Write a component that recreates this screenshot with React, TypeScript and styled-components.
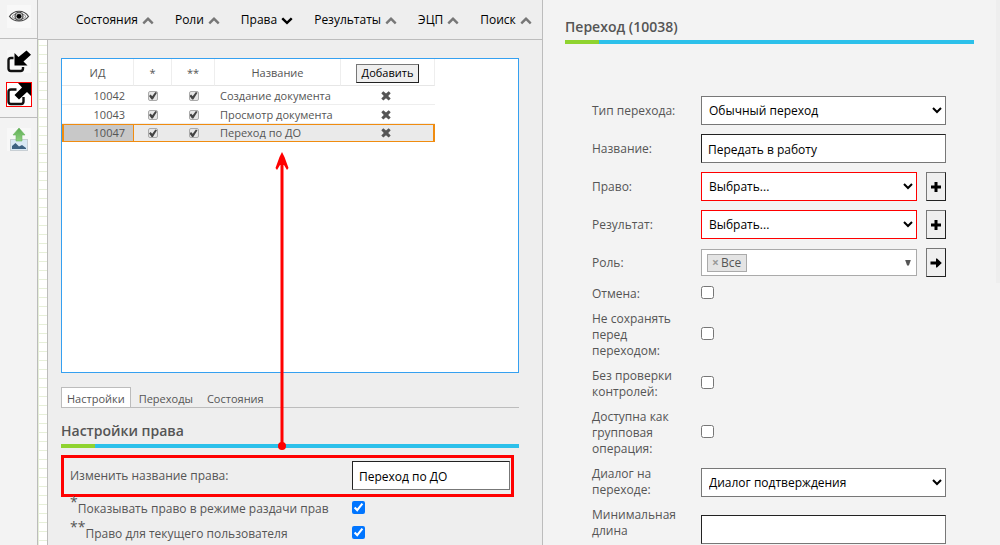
import React from "react";
import styled, { createGlobalStyle, css } from "styled-components";

const GlobalStyle = createGlobalStyle`
  *, *::before, *::after { box-sizing: border-box; }
  body {
    margin: 0;
    font-family: "Open Sans", "Noto Sans", sans-serif;
    font-size: 12px;
    line-height: 16px;
    color: #555;
    background: #eee;
  }
  button, input, select { font-family: inherit; font-size: inherit; color: #000; margin: 0; }
`;

const line = "#bcbcbc";

const Page = styled.div`
  display: grid;
  grid-template-columns: 38px minmax(0, 505fr) minmax(0, 453fr) 4px;
  height: 100vh;
  overflow: hidden;
`;

const Sidebar = styled.nav`
  display: flex;
  flex-direction: column;
  background: #f3f3f3;
  border-right: 1px solid ${line};
`;

const ToolGroup = styled.div`
  display: flex;
  flex-direction: column;
  align-items: center;
  gap: 9px;
  padding: 11px 0 10px;
  border-bottom: 1px solid ${line};
  &:first-child { padding-top: 5px; }
  &:last-child { border-bottom: 0; padding-top: 10px; }
`;

const ToolButton = styled.button<{ $active?: boolean }>`
  box-sizing: content-box;
  width: 24px;
  height: 23px;
  padding: 0;
  border: ${(p) => (p.$active ? "1px solid #f00" : "0")};
  background: ${(p) => (p.$active ? "#fff" : "#f8f8f8")};
  svg { display: block; width: 24px; height: 23px; }
`;

const Middle = styled.div`
  display: flex;
  flex-direction: column;
  min-height: 0;
  background: #eee;
  border-right: 1px solid ${line};
`;

const MenuBar = styled.nav`
  display: flex;
  flex: none;
  align-items: center;
  gap: 21px;
  height: 40px;
  padding-left: 38px;
  border-bottom: 1px solid ${line};
`;

const MenuButton = styled.button`
  display: flex;
  align-items: center;
  gap: 4px;
  padding: 0;
  border: 0;
  background: none;
  font-size: 12px;
  font-weight: 500;
  line-height: 16px;
`;

const Workspace = styled.div`
  display: flex;
  flex: 1;
  min-height: 0;
`;

const GridStrip = styled.div`
  flex: none;
  width: 10px;
  border-left: 1px solid #e6efd9;
  border-right: 1px solid ${line};
  background: repeating-linear-gradient(#fff 0 5px, #e6efd9 5px 6px, #fff 6px 9px);
`;

const Rights = styled.main`
  position: relative;
  flex: 1;
  min-width: 0;
  padding: 18px 23px 0 13px;
  overflow: hidden;
`;

const TableBox = styled.div`
  height: 315px;
  border: 1px solid #35a0f0;
  background: #fff;
`;

const RightsTable = styled.table`
  width: 373px;
  table-layout: fixed;
  border-collapse: separate;
  border-spacing: 0;
  font-size: 11px;
  th {
    height: 27px;
    padding: 2px 0 0;
    font-weight: 400;
    border-right: 1px solid #eee;
    border-bottom: 1px solid #e6e6e6;
  }
  td {
    height: 19px;
    padding: 1px 0 0;
    text-align: center;
    white-space: nowrap;
    border-bottom: 1px solid #eee;
  }
  td:first-child { text-align: right; padding-right: 9px; }
  td:nth-child(4) { text-align: left; padding-left: 5px; }
  td:last-child { padding-right: 5px; }
`;

const RightRow = styled.tr<{ $selected?: boolean }>`
  ${(p) =>
    p.$selected &&
    css`
      background: #eaeaea;
      td { height: 18px; padding-top: 0; border-top: 1px solid #f08c10; border-bottom-color: #f08c10; }
      td:first-child {
        background: #c8c8c8;
        border-left: 2px solid #f08c10;
        border-right: 1px solid #f08c10;
        padding-right: 8px;
      }
      td:last-child { border-right: 2px solid #f08c10; padding-right: 3px; }
    `}
`;

const FlagBox = styled.input`
  appearance: none;
  position: relative;
  display: block;
  width: 10px;
  height: 10px;
  margin: 0 auto;
  border: 1px solid #aaa;
  border-radius: 2px;
  background: #e6e6e6;
  &:checked::before {
    content: "";
    position: absolute;
    inset: 0;
    background: #444;
    clip-path: polygon(0 55%, 20% 38%, 40% 60%, 80% 5%, 100% 15%, 48% 100%, 32% 100%);
  }
`;

const AddButton = styled.button`
  display: block;
  width: 63px;
  height: 19px;
  margin: 0 auto;
  padding: 0;
  line-height: 16px;
  border: 1px solid #777;
  border-right-color: #222;
  border-bottom-color: #222;
  background: #efefef;
`;

const IconButton = styled.button`
  display: block;
  margin: 0 auto;
  padding: 0;
  border: 0;
  background: none;
  svg { display: block; }
`;

const Tabs = styled.div`
  display: flex;
  gap: 2px;
  margin-top: 14px;
  border-bottom: 1px solid ${line};
`;

const Tab = styled.button<{ $active?: boolean }>`
  height: 20px;
  padding: 3px 5px 0;
  border: 1px solid ${(p) => (p.$active ? line : "transparent")};
  border-bottom: 0;
  background: ${(p) => (p.$active ? "#fff" : "none")};
  color: #555;
  font-size: 11px;
  line-height: 16px;
`;

const Heading = styled.h2`
  margin: 0;
  font-size: 14px;
  font-weight: 600;
  line-height: 20px;
  &::after {
    content: "";
    display: block;
    height: 4px;
    margin-top: 3px;
    background: linear-gradient(90deg, #8fd32f 34px, #2cc0ea 34px);
  }
`;

const SettingsHead = styled.div`
  padding: 13px 0 3px;
`;

const SettingRow = styled.div<{ $marked?: boolean }>`
  display: flex;
  align-items: center;
  margin-right: 5px;
  padding: 4px 4px 5px 9px;
  ${(p) =>
    p.$marked &&
    css`
      margin-top: 4px;
      padding: 3px 1px 4px 6px;
      border: 3px solid #f00;
    `}
`;

const SettingLabel = styled.label`
  flex: 1;
  white-space: nowrap;
  sup {
    font-size: 14px;
    line-height: 0;
    vertical-align: 6px;
  }
`;

const SettingField = styled.div`
  flex: none;
  width: 158px;
  display: flex;
`;

const TextInput = styled.input`
  width: 100%;
  height: 29px;
  padding: 2px 6px 0;
  border: 1px solid #777;
  border-top-color: #222;
  border-left-color: #222;
  border-radius: 0;
  background: #fff;
`;

const CheckInput = styled.input`
  && {
    width: 13px;
    height: 13px;
    margin-bottom: 3px;
  }
`;

const Pointer = styled.svg`
  position: absolute;
  left: 226px;
  top: 111px;
  width: 16px;
  height: 300px;
  pointer-events: none;
`;

const Details = styled.aside`
  min-height: 0;
  overflow: hidden;
  padding: 17px 22px 0;
  background: #f3f3f3;
`;

const Form = styled.form`
  padding: 48px 28px 0 27px;
`;

const FormRow = styled.div`
  display: flex;
  align-items: center;
  padding: 4px 0 5px;
`;

const FormLabel = styled.label<{ $tall?: boolean }>`
  flex: none;
  width: 109px;
  min-height: ${(p) => (p.$tall ? 44 : 16)}px;
  padding-right: 20px;
`;

const FormField = styled.div`
  display: flex;
  align-items: center;
  flex: 1;
  min-width: 0;
  gap: 9px;
`;

const Select = styled.select<{ $required?: boolean }>`
  flex: 1;
  min-width: 0;
  height: 29px;
  padding: 0 3px;
  border: 1px solid ${(p) => (p.$required ? "#f00" : "#777")};
  border-radius: 0;
  background-color: #fff;
`;

const SquareButton = styled.button`
  flex: none;
  display: grid;
  place-items: center;
  width: 20px;
  height: 29px;
  padding: 0;
  border: 1px solid #777;
  border-right-color: #222;
  border-bottom-color: #222;
  background: #efefef;
`;

const TagBox = styled.div`
  display: flex;
  align-items: center;
  flex: 1;
  height: 27px;
  padding: 0 5px;
  border: 1px solid #aaa;
  background: #fff;
`;

const Tag = styled.span`
  display: flex;
  align-items: center;
  gap: 2px;
  height: 18px;
  padding: 0 5px 0 4px;
  border: 1px solid #aaa;
  background: #e4e4e4;
`;

const TagRemove = styled.button`
  padding: 0;
  border: 0;
  background: none;
  color: #999;
  font-weight: 700;
  line-height: 16px;
`;

const Caret = styled.span`
  margin-left: auto;
  width: 6px;
  height: 6px;
  background: #555;
  clip-path: polygon(0 0, 100% 0, 65% 100%, 35% 100%);
`;

const ScrollTrack = styled.div`
  background: #f3f3f3;
  &::before {
    content: "";
    display: block;
    height: 52vh;
    background: #eee;
  }
`;

const Chevron = ({ down }: { down?: boolean }) => (
  <svg width="12" height="12" viewBox="0 0 1792 1792" fill={down ? "#000" : "#777"} aria-hidden="true">
    {down ? (
      <path d="M1683 808l-742 741q-19 19-45 19t-45-19l-742-741q-19-19-19-45.5t19-45.5l166-165q19-19 45-19t45 19l531 531 531-531q19-19 45-19t45 19l166 165q19 19 19 45.5t-19 45.5z" />
    ) : (
      <path d="M1683 1331l-166 165q-19 19-45 19t-45-19l-531-531-531 531q-19 19-45 19t-45-19l-166-165q-19-19-19-45.5t19-45.5l742-741q19-19 45-19t45 19l742 741q19 19 19 45.5t-19 45.5z" />
    )}
  </svg>
);

const Cross = () => (
  <svg width="10" height="10" viewBox="0 0 10 10" fill="#555" aria-hidden="true">
    <path d="M0.3 2.3 2.3 0.3 5 2.5 7.7 0.3 9.7 2.3 7.2 4.9 9.7 7.5 7.7 9.6 5 7.3 2.3 9.6 0.3 7.5 2.8 4.9z" />
  </svg>
);

const Plus = () => (
  <svg width="12" height="12" viewBox="0 0 12 12" aria-hidden="true">
    <path d="M4.5 1h3v3.5H11v3H7.5V11h-3V7.5H1v-3h3.5z" />
  </svg>
);

const ArrowRight = () => (
  <svg width="12" height="12" viewBox="0 0 12 12" aria-hidden="true">
    <path d="M0.5 4.5H6V1.5H7L11.8 6 7 10.5H6V7.5H0.5z" />
  </svg>
);

const EyeIcon = () => (
  <svg viewBox="0 0 24 23" fill="none" stroke="#444" aria-hidden="true">
    <path d="M2.5 11.5C7 4.5 17 4.5 21.5 11.5C17 17.5 7 17.5 2.5 11.5z" strokeWidth="1.2" />
    <path d="M5 11.5C8 7.5 16 7.5 19 11.5C16 15.5 8 15.5 5 11.5z" strokeWidth="0.6" />
    <circle cx="12" cy="11.3" r="4" strokeWidth="1.1" fill="#bbb" />
    <circle cx="12" cy="11.3" r="2.4" fill="#000" stroke="none" />
  </svg>
);

const ImportIcon = () => (
  <svg viewBox="0 0 24 23" aria-hidden="true">
    <path d="M6.5 8H4Q1.500 8 1.500 10.500V18.500Q1.500 21 4 21H13.500Q16 21 16 18.500V17" fill="none" stroke="#111" strokeWidth="2.400" />
    <path d="M19.500 0.500 24 4.800 16.500 11.500 20.500 15.500H7.500V3L11.500 7z" fill="#000" />
  </svg>
);

const ExportIcon = () => (
  <svg viewBox="0 0 24 23" aria-hidden="true">
    <path d="M9.500 6.500H4Q1.500 6.500 1.500 9V18.500Q1.500 21 4 21H14Q16.500 21 16.500 18.500V14" fill="none" stroke="#111" strokeWidth="2.400" />
    <path d="M11 0H24V13L20 9 12 16.500 7.500 12 15 4.500z" fill="#000" />
  </svg>
);

const UploadImageIcon = () => (
  <svg viewBox="0 0 24 23" aria-hidden="true">
    <defs>
      <linearGradient id="leaf" x1="0" y1="0" x2="0" y2="1">
        <stop offset="0" stopColor="#5fae55" />
        <stop offset="1" stopColor="#8fd080" />
      </linearGradient>
    </defs>
    <rect x="3.5" y="11.5" width="17" height="11" fill="#d9e9f5" stroke="#c8cfd4" />
    <path d="M5 21V18L8.500 15 12 18.500 15 17 19 20V21z" fill="#3d6282" />
    <path d="M12 0 18 7H15V13H9V7H6z" fill="url(#leaf)" stroke="#6cb562" strokeWidth="0.600" />
  </svg>
);

const menu = [
  { title: "Состояния" },
  { title: "Роли" },
  { title: "Права", open: true },
  { title: "Результаты" },
  { title: "ЭЦП" },
  { title: "Поиск" },
];

const rights = [
  { id: 10042, name: "Создание документа" },
  { id: 10043, name: "Просмотр документа" },
  { id: 10047, name: "Переход по ДО", selected: true },
];

const CheckRow = ({ id, label }: { id: string; label: string }) => (
  <FormRow>
    <FormLabel htmlFor={id}>{label}</FormLabel>
    <FormField>
      <CheckInput type="checkbox" id={id} />
    </FormField>
  </FormRow>
);

export default function App() {
  return (
    <>
      <GlobalStyle />
      <Page>
        <Sidebar>
          <ToolGroup>
            <ToolButton aria-label="Просмотр"><EyeIcon /></ToolButton>
          </ToolGroup>
          <ToolGroup>
            <ToolButton aria-label="Импорт"><ImportIcon /></ToolButton>
            <ToolButton $active aria-label="Экспорт"><ExportIcon /></ToolButton>
          </ToolGroup>
          <ToolGroup>
            <ToolButton aria-label="Загрузить изображение"><UploadImageIcon /></ToolButton>
          </ToolGroup>
        </Sidebar>

        <Middle>
          <MenuBar>
            {menu.map((m) => (
              <MenuButton key={m.title}>
                {m.title}
                <Chevron down={m.open} />
              </MenuButton>
            ))}
          </MenuBar>
          <Workspace>
            <GridStrip />
            <Rights>
              <TableBox>
                <RightsTable>
                  <colgroup>
                    <col style={{ width: 72 }} />
                    <col style={{ width: 38 }} />
                    <col style={{ width: 43 }} />
                    <col style={{ width: 126 }} />
                    <col />
                  </colgroup>
                  <thead>
                    <tr>
                      <th>ИД</th>
                      <th>*</th>
                      <th>**</th>
                      <th>Название</th>
                      <th><AddButton>Добавить</AddButton></th>
                    </tr>
                  </thead>
                  <tbody>
                    {rights.map((r) => (
                      <RightRow key={r.id} $selected={r.selected}>
                        <td>{r.id}</td>
                        <td><FlagBox type="checkbox" defaultChecked aria-label={`* ${r.name}`} /></td>
                        <td><FlagBox type="checkbox" defaultChecked aria-label={`** ${r.name}`} /></td>
                        <td>{r.name}</td>
                        <td><IconButton aria-label="Удалить"><Cross /></IconButton></td>
                      </RightRow>
                    ))}
                  </tbody>
                </RightsTable>
              </TableBox>

              <Tabs>
                <Tab $active>Настройки</Tab>
                <Tab>Переходы</Tab>
                <Tab>Состояния</Tab>
              </Tabs>

              <SettingsHead>
                <Heading>Настройки права</Heading>
              </SettingsHead>
              <SettingRow $marked>
                <SettingLabel htmlFor="rightName">Изменить название права:</SettingLabel>
                <SettingField>
                  <TextInput id="rightName" defaultValue="Переход по ДО" />
                </SettingField>
              </SettingRow>
              <SettingRow>
                <SettingLabel htmlFor="share"><sup>*</sup>Показывать право в режиме раздачи прав</SettingLabel>
                <SettingField><CheckInput type="checkbox" id="share" defaultChecked /></SettingField>
              </SettingRow>
              <SettingRow>
                <SettingLabel htmlFor="current"><sup>**</sup>Право для текущего пользователя</SettingLabel>
                <SettingField><CheckInput type="checkbox" id="current" defaultChecked /></SettingField>
              </SettingRow>

              <Pointer viewBox="0 0 16 300" aria-hidden="true">
                <path d="M8 10V295" stroke="#f00" strokeWidth="3" />
                <path d="M8 1 10.500 6 14.500 17 13 19 10 14H6L3 19 1.500 17 5.500 6z" fill="#f00" />
                <circle cx="8" cy="295" r="4" fill="#f00" />
              </Pointer>
            </Rights>
          </Workspace>
        </Middle>

        <Details>
          <Heading>Переход (10038)</Heading>
          <Form>
            <FormRow>
              <FormLabel htmlFor="type">Тип перехода:</FormLabel>
              <FormField>
                <Select id="type"><option>Обычный переход</option></Select>
              </FormField>
            </FormRow>
            <FormRow>
              <FormLabel htmlFor="name">Название:</FormLabel>
              <FormField>
                <TextInput id="name" defaultValue="Передать в работу" />
              </FormField>
            </FormRow>
            <FormRow>
              <FormLabel htmlFor="right">Право:</FormLabel>
              <FormField>
                <Select id="right" $required><option>Выбрать...</option></Select>
                <SquareButton type="button" aria-label="Добавить право"><Plus /></SquareButton>
              </FormField>
            </FormRow>
            <FormRow>
              <FormLabel htmlFor="result">Результат:</FormLabel>
              <FormField>
                <Select id="result" $required><option>Выбрать...</option></Select>
                <SquareButton type="button" aria-label="Добавить результат"><Plus /></SquareButton>
              </FormField>
            </FormRow>
            <FormRow>
              <FormLabel as="span" id="roleLabel">Роль:</FormLabel>
              <FormField>
                <TagBox role="group" aria-labelledby="roleLabel">
                  <Tag><TagRemove type="button" aria-label="Убрать">×</TagRemove>Все</Tag>
                  <Caret />
                </TagBox>
                <SquareButton type="button" aria-label="Перейти к роли"><ArrowRight /></SquareButton>
              </FormField>
            </FormRow>
            <CheckRow id="cancel" label="Отмена:" />
            <CheckRow id="nosave" label="Не сохранять перед переходом:" />
            <CheckRow id="nocheck" label="Без проверки контролей:" />
            <CheckRow id="group" label="Доступна как групповая операция:" />
            <FormRow>
              <FormLabel htmlFor="dialog">Диалог на переходе:</FormLabel>
              <FormField>
                <Select id="dialog"><option>Диалог подтверждения</option></Select>
              </FormField>
            </FormRow>
            <FormRow>
              <FormLabel htmlFor="minlen" $tall>Минимальная длина</FormLabel>
              <FormField>
                <TextInput id="minlen" />
              </FormField>
            </FormRow>
          </Form>
        </Details>
        <ScrollTrack />
      </Page>
    </>
  );
}
